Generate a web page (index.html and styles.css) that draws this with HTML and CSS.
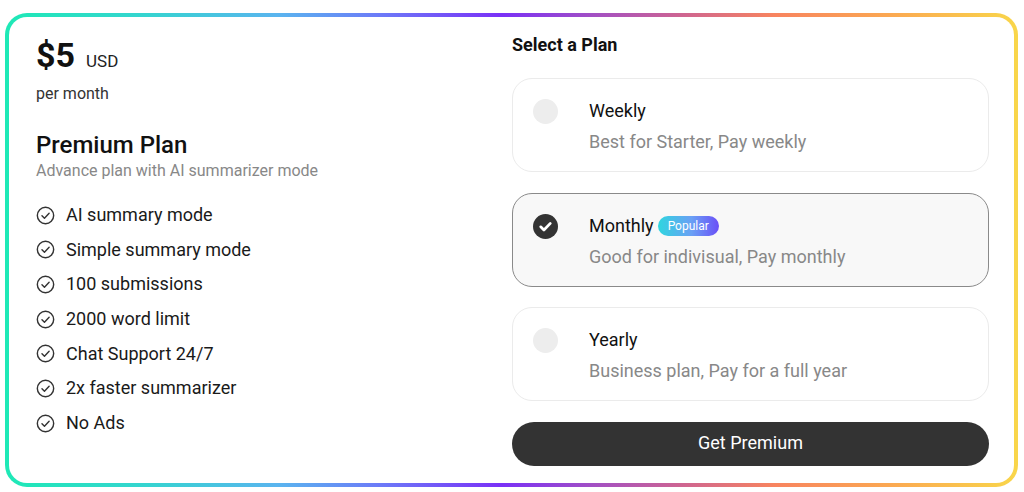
FILE: index.html
```html
<!DOCTYPE html>
<html lang="en">
<head>
<meta charset="utf-8">
<title>Premium Plan</title>
<link rel="stylesheet" href="styles.css">
</head>
<body>
<div class="frame">
  <div class="panel">
    <section class="summary">
      <div class="price"><span class="amount">$5</span><span class="currency">USD</span></div>
      <div class="period">per month</div>
      <h2 class="plan-name">Premium Plan</h2>
      <p class="plan-desc">Advance plan with AI summarizer mode</p>
      <ul class="features">
        <li><svg class="tick" viewBox="0 0 20 20"><circle cx="10" cy="10" r="8.6" fill="none" stroke="#333" stroke-width="1.5"/><path d="M6.3 10.2l2.6 2.6 4.9-5.2" fill="none" stroke="#333" stroke-width="1.5" stroke-linecap="round" stroke-linejoin="round"/></svg>AI summary mode</li>
        <li><svg class="tick" viewBox="0 0 20 20"><circle cx="10" cy="10" r="8.6" fill="none" stroke="#333" stroke-width="1.5"/><path d="M6.3 10.2l2.6 2.6 4.9-5.2" fill="none" stroke="#333" stroke-width="1.5" stroke-linecap="round" stroke-linejoin="round"/></svg>Simple summary mode</li>
        <li><svg class="tick" viewBox="0 0 20 20"><circle cx="10" cy="10" r="8.6" fill="none" stroke="#333" stroke-width="1.5"/><path d="M6.3 10.2l2.6 2.6 4.9-5.2" fill="none" stroke="#333" stroke-width="1.5" stroke-linecap="round" stroke-linejoin="round"/></svg>100 submissions</li>
        <li><svg class="tick" viewBox="0 0 20 20"><circle cx="10" cy="10" r="8.6" fill="none" stroke="#333" stroke-width="1.5"/><path d="M6.3 10.2l2.6 2.6 4.9-5.2" fill="none" stroke="#333" stroke-width="1.5" stroke-linecap="round" stroke-linejoin="round"/></svg>2000 word limit</li>
        <li><svg class="tick" viewBox="0 0 20 20"><circle cx="10" cy="10" r="8.6" fill="none" stroke="#333" stroke-width="1.5"/><path d="M6.3 10.2l2.6 2.6 4.9-5.2" fill="none" stroke="#333" stroke-width="1.5" stroke-linecap="round" stroke-linejoin="round"/></svg>Chat Support 24/7</li>
        <li><svg class="tick" viewBox="0 0 20 20"><circle cx="10" cy="10" r="8.6" fill="none" stroke="#333" stroke-width="1.5"/><path d="M6.3 10.2l2.6 2.6 4.9-5.2" fill="none" stroke="#333" stroke-width="1.5" stroke-linecap="round" stroke-linejoin="round"/></svg>2x faster summarizer</li>
        <li><svg class="tick" viewBox="0 0 20 20"><circle cx="10" cy="10" r="8.6" fill="none" stroke="#333" stroke-width="1.5"/><path d="M6.3 10.2l2.6 2.6 4.9-5.2" fill="none" stroke="#333" stroke-width="1.5" stroke-linecap="round" stroke-linejoin="round"/></svg>No Ads</li>
      </ul>
    </section>
    <section class="chooser">
      <h3 class="chooser-title">Select a Plan</h3>
      <div class="options">
        <div class="option">
          <span class="radio"></span>
          <div class="option-text">
            <div class="option-name">Weekly</div>
            <div class="option-desc">Best for Starter, Pay weekly</div>
          </div>
        </div>
        <div class="option selected">
          <span class="radio checked"><svg viewBox="0 0 24 24"><path d="M7.4 12.3l3.1 3.1 6.1-6.4" fill="none" stroke="#fff" stroke-width="2.6" stroke-linecap="round" stroke-linejoin="round"/></svg></span>
          <div class="option-text">
            <div class="option-name">Monthly <span class="badge">Popular</span></div>
            <div class="option-desc">Good for indivisual, Pay monthly</div>
          </div>
        </div>
        <div class="option">
          <span class="radio"></span>
          <div class="option-text">
            <div class="option-name">Yearly</div>
            <div class="option-desc">Business plan, Pay for a full year</div>
          </div>
        </div>
      </div>
      <button class="cta">Get Premium</button>
    </section>
  </div>
</div>
</body>
</html>
```
FILE: styles.css
```css
* { box-sizing: border-box; }
html, body { margin: 0; background: #fff; }
body {
  padding: 13px 6px 5px 5px;
  font-family: Roboto, "Liberation Sans", Arial, sans-serif;
  color: #111;
}
.frame {
  height: 474px;
  border-radius: 22px;
  padding: 4px;
  background: linear-gradient(90deg, #1ee9b6 0%, #35d4d0 14%, #5ab4ef 27%, #6c7af8 37%, #7a30f7 49%, #a24fc4 58%, #cf6590 67%, #f8845f 76%, #fba752 87%, #f9d64a 100%);
}
.panel {
  height: 100%;
  background: #fff;
  border-radius: 18px;
  padding: 17px 25px 17px 27px;
  display: grid;
  grid-template-columns: 1fr 477px;
}
.summary { display: flex; flex-direction: column; }
.price {
  margin-top: 1px;
  height: 40px;
  line-height: 40px;
  display: flex;
  align-items: baseline;
}
.amount { font-size: 34px; font-weight: 700; color: #111; }
.currency { font-size: 17px; margin-left: 11px; color: #222; }
.period { margin-top: 9px; font-size: 16px; line-height: 20px; color: #333; }
.plan-name {
  margin: 26px 0 0;
  font-size: 24px;
  line-height: 30px;
  font-weight: 500;
  color: #111;
}
.plan-desc { margin: 1px 0 0; font-size: 16px; line-height: 20px; color: #888; }
.features {
  list-style: none;
  margin: 22px 0 0;
  padding: 0;
  display: flex;
  flex-direction: column;
  gap: 10.7px;
}
.features li {
  display: flex;
  align-items: center;
  gap: 11px;
  font-size: 18px;
  line-height: 24px;
  color: #1a1a1a;
}
.tick { width: 19px; height: 19px; flex: none; }
.chooser { display: flex; flex-direction: column; }
.chooser-title {
  margin: 1px 0 0;
  font-size: 18px;
  line-height: 20px;
  font-weight: 700;
  color: #111;
}
.options { margin-top: 23px; display: flex; flex-direction: column; gap: 20.5px; }
.option {
  height: 94px;
  border: 1px solid #ebebeb;
  border-radius: 20px;
  padding: 20px 20px 0 20px;
  display: flex;
  align-items: flex-start;
  gap: 31px;
  background: #fff;
}
.option.selected { border-color: #8a8a8a; background: #f8f8f8; }
.radio {
  width: 25px;
  height: 25px;
  border-radius: 50%;
  background: #ededed;
  flex: none;
  display: flex;
  align-items: center;
  justify-content: center;
}
.radio.checked { background: #333; }
.radio svg { width: 25px; height: 25px; }
.option-text { display: flex; flex-direction: column; gap: 7px; }
.option-name {
  font-size: 18px;
  line-height: 24px;
  color: #111;
  display: flex;
  align-items: center;
  gap: 4px;
}
.option-desc { font-size: 18px; line-height: 24px; color: #888; }
.badge {
  display: inline-block;
  height: 20px;
  line-height: 20px;
  padding: 0 10px;
  border-radius: 10px;
  font-size: 12px;
  color: #fff;
  background: linear-gradient(90deg, #2fd6df 0%, #6aa0f5 55%, #6a4ff7 100%);
}
.cta {
  margin-top: 21px;
  height: 44px;
  padding: 0 0 3px;
  border: none;
  border-radius: 22px;
  background: #333;
  color: #fff;
  font-family: inherit;
  font-size: 18px;
  cursor: pointer;
}
```
